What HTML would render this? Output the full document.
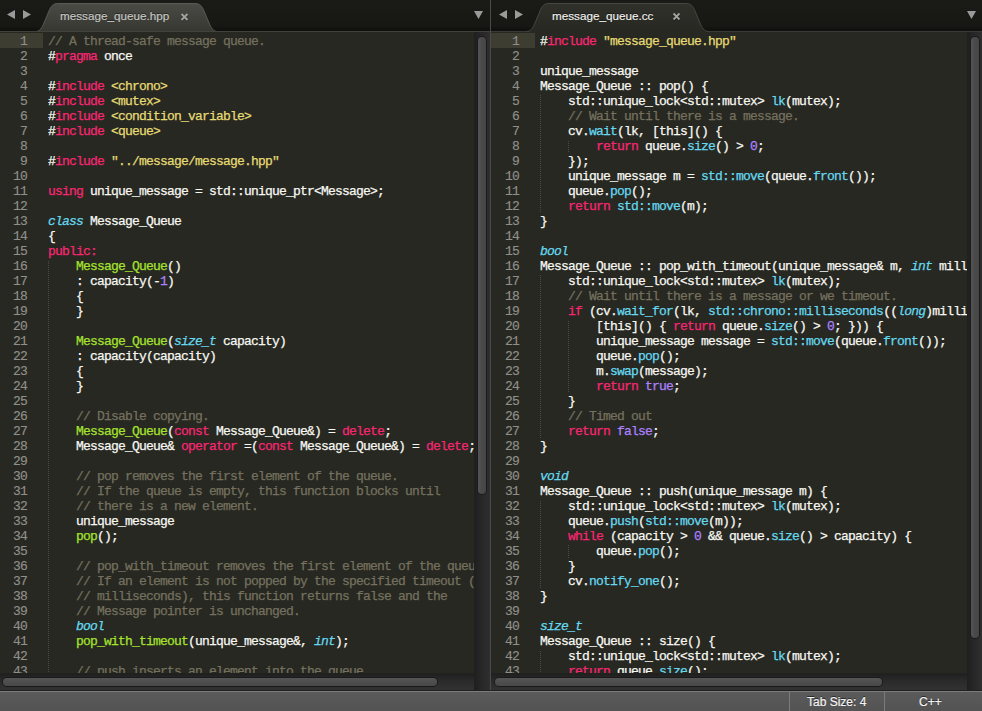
<!DOCTYPE html>
<html><head><meta charset="utf-8">
<style>
*{margin:0;padding:0;box-sizing:border-box}
html,body{width:982px;height:711px;overflow:hidden;background:#272822}
body{position:relative;font-family:"Liberation Sans",sans-serif}
.abs{position:absolute}
.tabbar{position:absolute;top:0;height:32px;background:linear-gradient(to bottom,#1a1a16 0,#171714 26px,#10100e 30px,#10100e 31px)}
.code,.nums{position:absolute;top:34px;font-family:"Liberation Mono",monospace;font-size:13px;letter-spacing:-0.8px;line-height:15px;white-space:pre;color:#F8F8F2}
.nums{color:#90908A;text-align:right}
.code{-webkit-text-stroke:0.25px}.nums{-webkit-text-stroke:0.15px}
.l{height:15px}

i{font-style:normal}
.c{color:#75715E}.k{color:#F92672}.s{color:#E6DB74}.f{color:#A6E22E}.t{color:#66D9EF;font-style:italic}.u{color:#66D9EF}.n{color:#AE81FF}
.g{position:absolute;width:1px;background:repeating-linear-gradient(to bottom,#4b4b45 0,#4b4b45 1px,transparent 1px,transparent 2px)}
.vtrack{position:absolute;top:32px;height:658px;width:16px;background:linear-gradient(to right,#1f1f1f,#262626 40%,#2f2f2f 100%)}
.vthumb{position:absolute;width:8px;border-radius:4px;background:linear-gradient(to right,#555,#4a4a4a 40%,#464646);box-shadow:0 0 0 1px #1a1a1a}
.htrack{position:absolute;top:674px;height:16px;background:linear-gradient(to bottom,#202020,#2a2a2a 40%,#323232 100%)}
.hthumb{position:absolute;top:678px;height:8px;border-radius:4px;background:linear-gradient(to bottom,#555,#484848);box-shadow:0 0 0 1px #1a1a1a}
.tabtxt{position:absolute;top:9px;font-size:11.7px;color:#c8c8c4;-webkit-text-stroke:0.15px;white-space:pre;text-shadow:0 -1px 0 rgba(0,0,0,.5)}
.status{position:absolute;left:0;top:690px;width:982px;height:21px;background:linear-gradient(to bottom,#1f1f1f 0,#1f1f1f 1px,#7c7c7c 1px,#7c7c7c 2px,#5b5b5b 2px,#535353 100%)}
.st{position:absolute;top:695px;font-size:12px;color:#f4f4f4;-webkit-text-stroke:0.2px;text-shadow:0 -1px 0 rgba(0,0,0,.55)}
</style></head><body>
<!-- left tab bar -->
<div class="tabbar" style="left:0;width:490px"></div>
<div class="tabbar" style="left:491px;width:491px"></div>
<svg class="abs" style="left:0;top:0" width="982" height="33">
  <rect x="491" y="31" width="491" height="1" fill="#3a3a36"/>
  <polygon points="7,14.5 15,10 15,19" fill="#9a9a9a"/>
  <polygon points="23,10 23,19 31,14.5" fill="#9a9a9a"/>
  <polygon points="474,11 483,11 478.5,19" fill="#9a9a9a"/>
  <polygon points="499,14.5 507,10 507,19" fill="#9a9a9a"/>
  <polygon points="515,10 515,19 523,14.5" fill="#9a9a9a"/>
  <polygon points="967,11 976,11 971.5,19" fill="#9a9a9a"/>
  <defs>
   <linearGradient id="tg" x1="0" y1="0" x2="0" y2="1"><stop offset="0" stop-color="#4b4b46"/><stop offset="1" stop-color="#373732"/></linearGradient>
   <linearGradient id="tg2" x1="0" y1="0" x2="0" y2="1"><stop offset="0" stop-color="#31312c"/><stop offset="1" stop-color="#272822"/></linearGradient>
  </defs>
  <path d="M36,31.5 C40,31 42,28 44,23 L49,11 C51,6 53,3.5 58,3.5 L195,3.5 C200,3.5 202,6 204,11 L209,23 C211,28 213,31 217,31.5" fill="url(#tg)" stroke="#5a5a55" stroke-width="1"/>
  <rect x="0" y="31" width="490" height="1" fill="#42423d"/>
  <path d="M527,31.5 C531,31 533,28 535,23 L540,11 C542,6 544,3.5 549,3.5 L686,3.5 C691,3.5 693,6 695,11 L700,23 C702,28 704,31 708,31.5" fill="url(#tg2)" stroke="#474741" stroke-width="1"/>
  <rect x="530" y="31" width="176" height="2" fill="#272822"/>
  <path d="M181.5,15 L187.5,21 M187.5,15 L181.5,21" stroke="#222220" stroke-width="1.8" opacity=".6"/><path d="M181.5,14 L187.5,20 M187.5,14 L181.5,20" stroke="#a2a29f" stroke-width="1.8"/>
  <path d="M673.5,14.5 L679.5,20.5 M679.5,14.5 L673.5,20.5" stroke="#111" stroke-width="1.8" opacity=".6"/><path d="M673.5,13.5 L679.5,19.5 M679.5,13.5 L673.5,19.5" stroke="#a2a29f" stroke-width="1.8"/>
</svg>
<div class="tabtxt" style="left:60px">message_queue.hpp</div>
<div class="tabtxt" style="left:552px;color:#f0f0ec">message_queue.cc</div>
<!-- divider -->
<div class="abs" style="left:490px;top:0;width:1px;height:690px;background:#4a4a4a"></div>

<!-- left editor -->
<div class="abs" style="left:0;top:33px;width:43px;height:15px;background:#3E3D32"></div>
<div class="nums" style="left:0;width:27px"><div class="l h">1</div><div class="l">2</div><div class="l">3</div><div class="l">4</div><div class="l">5</div><div class="l">6</div><div class="l">7</div><div class="l">8</div><div class="l">9</div><div class="l">10</div><div class="l">11</div><div class="l">12</div><div class="l">13</div><div class="l">14</div><div class="l">15</div><div class="l">16</div><div class="l">17</div><div class="l">18</div><div class="l">19</div><div class="l">20</div><div class="l">21</div><div class="l">22</div><div class="l">23</div><div class="l">24</div><div class="l">25</div><div class="l">26</div><div class="l">27</div><div class="l">28</div><div class="l">29</div><div class="l">30</div><div class="l">31</div><div class="l">32</div><div class="l">33</div><div class="l">34</div><div class="l">35</div><div class="l">36</div><div class="l">37</div><div class="l">38</div><div class="l">39</div><div class="l">40</div><div class="l">41</div><div class="l">42</div><div class="l">43</div></div>
<div class="g" style="left:48px;top:261px;height:417px"></div>
<div class="code" style="left:48px;width:426px;height:641px;overflow:hidden"><div class="l"><i class="c">// A thread-safe message queue.</i></div><div class="l">#<i class="k">pragma</i> once</div><div class="l">&#8203;</div><div class="l">#<i class="k">include</i> <i class="s">&lt;chrono&gt;</i></div><div class="l">#<i class="k">include</i> <i class="s">&lt;mutex&gt;</i></div><div class="l">#<i class="k">include</i> <i class="s">&lt;condition_variable&gt;</i></div><div class="l">#<i class="k">include</i> <i class="s">&lt;queue&gt;</i></div><div class="l">&#8203;</div><div class="l">#<i class="k">include</i> <i class="s">"../message/message.hpp"</i></div><div class="l">&#8203;</div><div class="l"><i class="k">using</i> unique_message = std::unique_ptr&lt;Message&gt;;</div><div class="l">&#8203;</div><div class="l"><i class="t">class</i> Message_Queue</div><div class="l">{</div><div class="l"><i class="k">public:</i></div><div class="l">    <i class="f">Message_Queue</i>()</div><div class="l">    : capacity(-<i class="n">1</i>)</div><div class="l">    {</div><div class="l">    }</div><div class="l">&#8203;</div><div class="l">    <i class="f">Message_Queue</i>(<i class="t">size_t</i> capacity)</div><div class="l">    : capacity(capacity)</div><div class="l">    {</div><div class="l">    }</div><div class="l">&#8203;</div><div class="l">    <i class="c">// Disable copying.</i></div><div class="l">    <i class="f">Message_Queue</i>(<i class="k">const</i> Message_Queue&amp;) = <i class="k">delete</i>;</div><div class="l">    Message_Queue&amp; <i class="k">operator</i> =(<i class="k">const</i> Message_Queue&amp;) = <i class="k">delete</i>;</div><div class="l">&#8203;</div><div class="l">    <i class="c">// pop removes the first element of the queue.</i></div><div class="l">    <i class="c">// If the queue is empty, this function blocks until</i></div><div class="l">    <i class="c">// there is a new element.</i></div><div class="l">    unique_message</div><div class="l">    <i class="f">pop</i>();</div><div class="l">&#8203;</div><div class="l">    <i class="c">// pop_with_timeout removes the first element of the queue.</i></div><div class="l">    <i class="c">// If an element is not popped by the specified timeout (in</i></div><div class="l">    <i class="c">// milliseconds), this function returns false and the</i></div><div class="l">    <i class="c">// Message pointer is unchanged.</i></div><div class="l">    <i class="t">bool</i></div><div class="l">    <i class="f">pop_with_timeout</i>(unique_message&amp;, <i class="t">int</i>);</div><div class="l">&#8203;</div><div class="l">    <i class="c">// push inserts an element into the queue.</i></div></div>
<div class="vtrack" style="left:474px"></div>
<div class="vthumb" style="left:478px;top:37px;height:457px"></div>
<div class="htrack" style="left:0;width:474px"></div>
<div class="hthumb" style="left:3px;width:434px"></div>

<!-- right editor -->
<div class="abs" style="left:491px;top:33px;width:44px;height:15px;background:#3E3D32"></div>
<div class="nums" style="left:491px;width:28px"><div class="l h">1</div><div class="l">2</div><div class="l">3</div><div class="l">4</div><div class="l">5</div><div class="l">6</div><div class="l">7</div><div class="l">8</div><div class="l">9</div><div class="l">10</div><div class="l">11</div><div class="l">12</div><div class="l">13</div><div class="l">14</div><div class="l">15</div><div class="l">16</div><div class="l">17</div><div class="l">18</div><div class="l">19</div><div class="l">20</div><div class="l">21</div><div class="l">22</div><div class="l">23</div><div class="l">24</div><div class="l">25</div><div class="l">26</div><div class="l">27</div><div class="l">28</div><div class="l">29</div><div class="l">30</div><div class="l">31</div><div class="l">32</div><div class="l">33</div><div class="l">34</div><div class="l">35</div><div class="l">36</div><div class="l">37</div><div class="l">38</div><div class="l">39</div><div class="l">40</div><div class="l">41</div><div class="l">42</div><div class="l">43</div></div>
<div class="g" style="left:540px;top:95px;height:118px"></div>
<div class="g" style="left:568px;top:141px;height:12px"></div>
<div class="g" style="left:540px;top:275px;height:163px"></div>
<div class="g" style="left:568px;top:321px;height:72px"></div>
<div class="g" style="left:540px;top:501px;height:87px"></div>
<div class="g" style="left:568px;top:545px;height:13px"></div>
<div class="g" style="left:540px;top:651px;height:27px"></div>
<div class="code" style="left:540px;width:427px;height:641px;overflow:hidden"><div class="l">#<i class="k">include</i> <i class="s">"message_queue.hpp"</i></div><div class="l">&#8203;</div><div class="l">unique_message</div><div class="l">Message_Queue :: pop() {</div><div class="l">    std::unique_lock&lt;std::mutex&gt; <i class="u">lk</i>(mutex);</div><div class="l">    <i class="c">// Wait until there is a message.</i></div><div class="l">    cv.<i class="u">wait</i>(lk, [this]() {</div><div class="l">        <i class="k">return</i> queue.<i class="u">size</i>() &gt; <i class="n">0</i>;</div><div class="l">    });</div><div class="l">    unique_message m = <i class="u">std::move</i>(queue.<i class="u">front</i>());</div><div class="l">    queue.<i class="u">pop</i>();</div><div class="l">    <i class="k">return</i> <i class="u">std::move</i>(m);</div><div class="l">}</div><div class="l">&#8203;</div><div class="l"><i class="t">bool</i></div><div class="l">Message_Queue :: pop_with_timeout(unique_message&amp; m, <i class="t">int</i> milliseconds) {</div><div class="l">    std::unique_lock&lt;std::mutex&gt; <i class="u">lk</i>(mutex);</div><div class="l">    <i class="c">// Wait until there is a message or we timeout.</i></div><div class="l">    <i class="k">if</i> (cv.<i class="u">wait_for</i>(lk, <i class="u">std::chrono::milliseconds</i>((<i class="t">long</i>)milliseconds),</div><div class="l">        [this]() { <i class="k">return</i> queue.<i class="u">size</i>() &gt; <i class="n">0</i>; })) {</div><div class="l">        unique_message message = <i class="u">std::move</i>(queue.<i class="u">front</i>());</div><div class="l">        queue.<i class="u">pop</i>();</div><div class="l">        m.<i class="u">swap</i>(message);</div><div class="l">        <i class="k">return</i> <i class="n">true</i>;</div><div class="l">    }</div><div class="l">    <i class="c">// Timed out</i></div><div class="l">    <i class="k">return</i> <i class="n">false</i>;</div><div class="l">}</div><div class="l">&#8203;</div><div class="l"><i class="t">void</i></div><div class="l">Message_Queue :: push(unique_message m) {</div><div class="l">    std::unique_lock&lt;std::mutex&gt; <i class="u">lk</i>(mutex);</div><div class="l">    queue.<i class="u">push</i>(<i class="u">std::move</i>(m));</div><div class="l">    <i class="k">while</i> (capacity &gt; <i class="n">0</i> &amp;&amp; queue.<i class="u">size</i>() &gt; capacity) {</div><div class="l">        queue.<i class="u">pop</i>();</div><div class="l">    }</div><div class="l">    cv.<i class="u">notify_one</i>();</div><div class="l">}</div><div class="l">&#8203;</div><div class="l"><i class="t">size_t</i></div><div class="l">Message_Queue :: size() {</div><div class="l">    std::unique_lock&lt;std::mutex&gt; <i class="u">lk</i>(mutex);</div><div class="l">    <i class="k">return</i> queue.<i class="u">size</i>();</div></div>
<div class="vtrack" style="left:967px;width:15px"></div>
<div class="vthumb" style="left:971px;top:37px;height:601px"></div>
<div class="htrack" style="left:491px;width:476px"></div>
<div class="hthumb" style="left:495px;width:387px"></div>

<div class="abs" style="left:0;top:673px;width:474px;height:1px;background:#21221d"></div>
<div class="abs" style="left:491px;top:673px;width:476px;height:1px;background:#21221d"></div>
<!-- status -->
<div class="status"></div>
<div class="abs" style="left:789px;top:692px;width:1px;height:19px;background:#7b7b7b"></div>
<div class="abs" style="left:884px;top:692px;width:1px;height:19px;background:#7b7b7b"></div>
<div class="st" style="left:807px">Tab Size: 4</div>
<div class="st" style="left:919px">C++</div>
</body></html>
